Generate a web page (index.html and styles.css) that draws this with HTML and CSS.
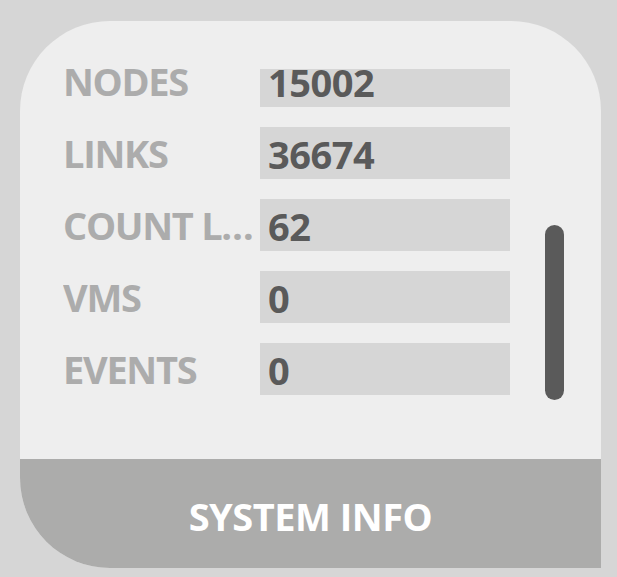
FILE: index.html
```html
<!DOCTYPE html>
<html lang="en">
<head>
    <meta charset="UTF-8">
    <meta name="viewport" content="width=device-width, initial-scale=1.0">
    <title>System Info</title>
    <link rel="stylesheet" href="styles.css">
</head>
<body>
    <div class="panel">
        <div class="panel-body">
            <div class="stats">
                <div class="stat-row">
                    <span class="stat-label">NODES</span>
                    <span class="stat-value">15002</span>
                </div>
                <div class="stat-row">
                    <span class="stat-label">LINKS</span>
                    <span class="stat-value">36674</span>
                </div>
                <div class="stat-row">
                    <span class="stat-label">COUNT LINKS</span>
                    <span class="stat-value">62</span>
                </div>
                <div class="stat-row">
                    <span class="stat-label">VMS</span>
                    <span class="stat-value">0</span>
                </div>
                <div class="stat-row">
                    <span class="stat-label">EVENTS</span>
                    <span class="stat-value">0</span>
                </div>
            </div>
            <!-- custom scrollbar thumb -->
            <div class="scroll-thumb"></div>
        </div>
        <div class="panel-footer">SYSTEM INFO</div>
    </div>
</body>
</html>
```

FILE: styles.css
```css
body {
    margin: 0;
    background: #d6d6d6;
    font-family: 'Open Sans', sans-serif;
    font-weight: 700;
}

.panel {
    margin: 21px 0 0 20px;
    width: 581px;
    height: 547px;
    background: #eeeeee;
    border-radius: 90px 90px 0 90px;
    overflow: hidden;
    display: flex;
    flex-direction: column;
}

.panel-body {
    position: relative;
    flex: 1;
    margin-top: 48px;
    overflow: hidden;
}

.stats {
    margin-top: -14px;
    padding-left: 43px;
    display: flex;
    flex-direction: column;
    gap: 20px;
}

.stat-row {
    display: flex;
    align-items: center;
    gap: 3px;
    height: 52px;
}

.stat-label {
    width: 194px;
    color: #acacac;
    font-size: 38px;
    white-space: nowrap;
    overflow: hidden;
    text-overflow: ellipsis;
    letter-spacing: -1.3px;
}

.stat-value {
    width: 242px;
    height: 52px;
    line-height: 55px;
    padding-left: 8px;
    background: #d6d6d6;
    color: #5a5a5a;
    font-size: 38px;
    letter-spacing: -0.5px;
}

.scroll-thumb {
    position: absolute;
    top: 156px;
    left: 525px;
    width: 19px;
    height: 175px;
    border-radius: 10px;
    background: #5a5a5a;
}

.panel-footer {
    height: 109px;
    background: #acacab;
    color: #ffffff;
    font-size: 38px;
    letter-spacing: -0.5px;
    display: flex;
    align-items: center;
    justify-content: center;
    padding-top: 4px;
    box-sizing: border-box;
}
```
